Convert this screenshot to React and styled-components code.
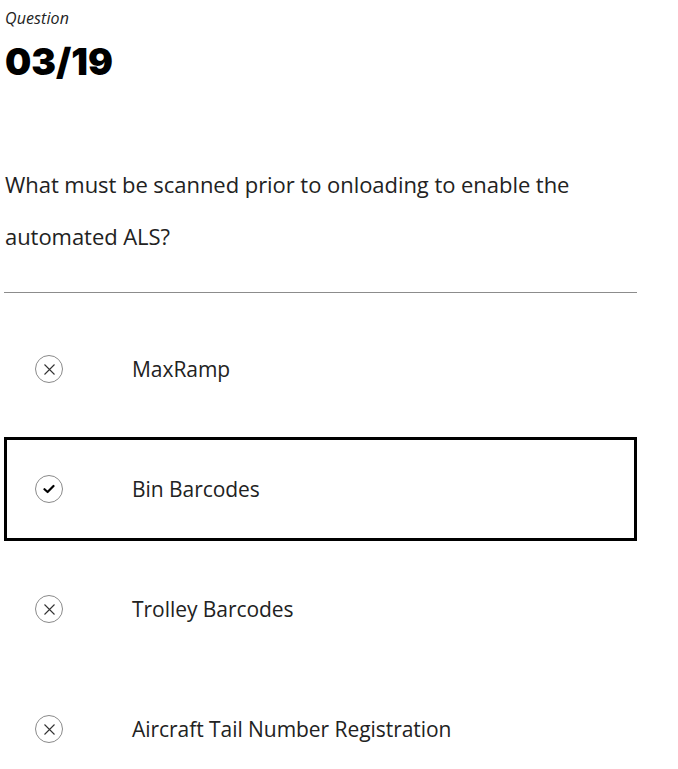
import React from "react";
import styled, { createGlobalStyle } from "styled-components";

const GlobalStyle = createGlobalStyle`
  body {
    margin: 0;
    background: #ffffff;
    font-family: "Open Sans", "Noto Sans", sans-serif;
    color: #1a1a1a;
  }
`;

const Page = styled.div`
  width: 633px;
  padding: 6px 0 0 4px;
`;

const Header = styled.div`
  padding-left: 1px;
`;

const Label = styled.div`
  font-family: "Open Sans", sans-serif;
  font-style: italic;
  font-size: 16px;
  line-height: 24px;
  letter-spacing: 0.1px;
  color: #222;
`;

const Counter = styled.h1`
  margin: 12px 0 0;
  font-family: Inter, "Liberation Sans", sans-serif;
  font-weight: 900;
  font-size: 37px;
  line-height: 40px;
  color: #000;
`;

const Prompt = styled.p`
  margin: 76px 0 0 1px;
  max-width: 600px;
  font-family: "Open Sans", sans-serif;
  font-size: 22px;
  line-height: 52px;
  letter-spacing: -0.05px;
  color: #222;
`;

const Divider = styled.hr`
  margin: 30px 0 0;
  border: none;
  border-top: 1px solid #8c8c8c;
`;

const Options = styled.ul`
  list-style: none;
  margin: 24px 0 0;
  padding: 0;
  display: flex;
  flex-direction: column;
  gap: 16px;
`;

const Option = styled.li`
  height: 104px;
  box-sizing: border-box;
  display: flex;
  align-items: center;
  border: 3px solid ${(p) => (p.$selected ? "#000" : "transparent")};
  padding-left: 28px;
`;

const Mark = styled.span`
  width: 28px;
  height: 28px;
  box-sizing: border-box;
  border-radius: 50%;
  border: 1px solid #8a8a8a;
  display: flex;
  align-items: center;
  justify-content: center;
  flex-shrink: 0;
`;

const OptionText = styled.span`
  margin-left: 69px;
  font-family: "Open Sans", sans-serif;
  font-size: 21px;
  letter-spacing: -0.05px;
  color: #222;
`;

const CrossIcon = () => (
  <svg width="13" height="13" viewBox="0 0 13 13">
    <path d="M1.5 1.5 L11.5 11.5 M11.5 1.5 L1.5 11.5" stroke="#333" strokeWidth="1.1" fill="none" />
  </svg>
);

const CheckIcon = () => (
  <svg width="12" height="10" viewBox="0 0 12 10">
    <path d="M1.5 5.2 L4.6 8 L10.5 2" stroke="#000" strokeWidth="2.2" fill="none" strokeLinecap="round" strokeLinejoin="round" />
  </svg>
);

const answers = [
  { text: "MaxRamp", selected: false },
  { text: "Bin Barcodes", selected: true },
  { text: "Trolley Barcodes", selected: false },
  { text: "Aircraft Tail Number Registration", selected: false },
];

export default function App() {
  return (
    <Page>
      <GlobalStyle />
      <Header>
        <Label>Question</Label>
        <Counter>03/19</Counter>
      </Header>
      <Prompt>
        What must be scanned prior to onloading to enable the automated ALS?
      </Prompt>
      <Divider />
      <Options>
        {answers.map((a) => (
          <Option key={a.text} $selected={a.selected}>
            <Mark>{a.selected ? <CheckIcon /> : <CrossIcon />}</Mark>
            <OptionText>{a.text}</OptionText>
          </Option>
        ))}
      </Options>
    </Page>
  );
}
